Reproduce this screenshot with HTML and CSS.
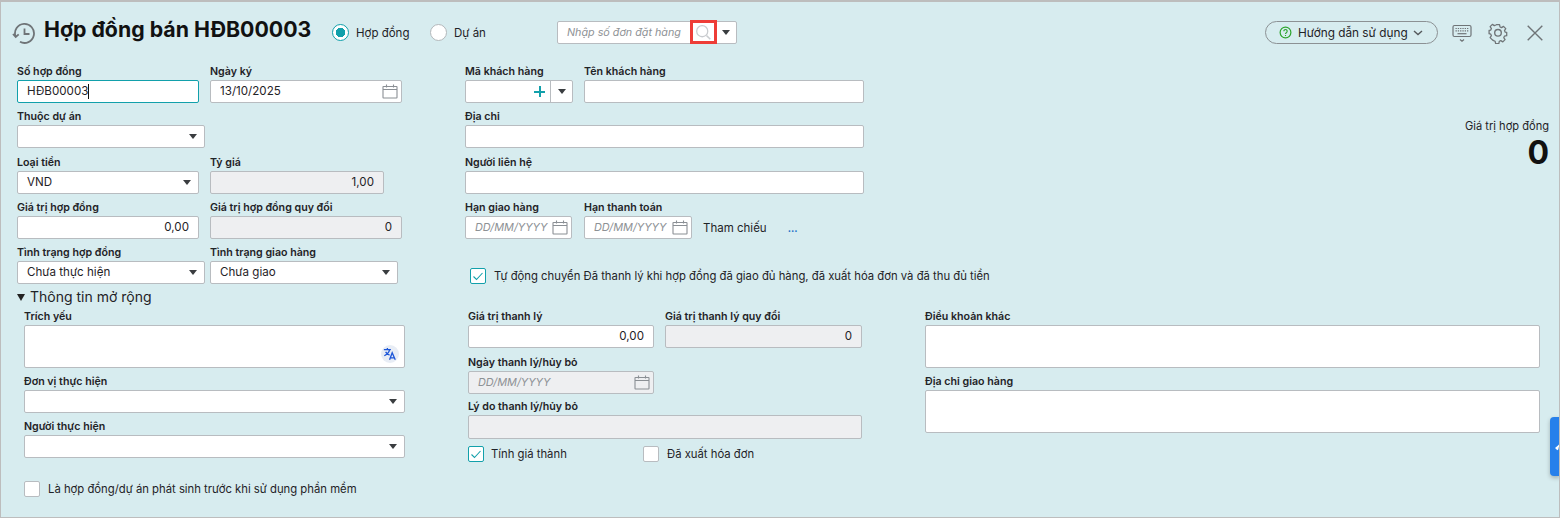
FILE: index.html
```html
<!DOCTYPE html>
<html lang="vi">
<head>
<meta charset="utf-8">
<title>Hợp đồng bán</title>
<link rel="stylesheet" href="styles.css">
</head>
<body>
<svg class="defs" width="0" height="0" aria-hidden="true">
  <symbol id="cal" viewBox="0 0 16 16"><path d="M1.500 3.500h13a.5.5 0 0 1 .5.5v10.500a.5.5 0 0 1-.5.5h-13a.5.5 0 0 1-.5-.5V4a.5.5 0 0 1 .5-.5zM1 6.500h14M4.500 1.500v3M11.500 1.500v3" fill="none" stroke="#8a8f94" stroke-width="1.100"/></symbol>
  <symbol id="tick" viewBox="0 0 16 16"><path d="M3.500 8.500l3 3 6-6.500" fill="none" stroke="#12a0ab" stroke-width="1.100"/></symbol>
</svg>
<div class="page">
  <header class="head">
    <svg class="hist" viewBox="0 0 24 24" width="24" height="24"><path d="M3.500 15.500A9.500 9.500 0 1 1 8 20.800M12.500 7.500v5.500h5M1 13l2.700 3 3-2.700" fill="none" stroke="#6f7477" stroke-width="1.800"/></svg>
    <h1 class="title">Hợp đồng bán HĐB00003</h1>
    <div class="radios">
      <span class="radio on"></span><span class="radio-text first">Hợp đồng</span>
      <span class="radio"></span><span class="radio-text">Dự án</span>
    </div>
    <div class="order">
      <span class="order-text">Nhập số đơn đặt hàng</span>
      <span class="order-search">
        <svg viewBox="0 0 20 20" width="18" height="18"><circle cx="8.500" cy="8.500" r="6.500" fill="none" stroke="#c9cccf" stroke-width="1.500"/><path d="M13.500 13.500l4.500 4.500" stroke="#c9cccf" stroke-width="1.800"/></svg>
      </span>
      <span class="order-drop"><i class="arrow"></i></span>
    </div>
    <div class="tools">
      <div class="guide">
        <svg viewBox="0 0 14 14" width="13" height="13"><circle cx="7" cy="7" r="5.800" fill="none" stroke="#2ea52e" stroke-width="1.300"/><path d="M5.200 5.600a1.800 1.800 0 1 1 2.700 1.600c-.6.400-.9.700-.9 1.300M7 9.700v1" fill="none" stroke="#2ea52e" stroke-width="1.200"/></svg>
        <span>Hướng dẫn sử dụng</span>
        <svg viewBox="0 0 10 6" width="10" height="6"><path d="M1 1l4 3.500L9 1" fill="none" stroke="#55595c" stroke-width="1.400"/></svg>
      </div>
      <svg class="kb" viewBox="0 0 20 20" width="20" height="20"><rect x="1" y="1.500" width="18" height="11" rx="1.500" fill="none" stroke="#6f7477" stroke-width="1.200"/><path d="M3.500 4.500h13M3.500 6.900h13" stroke="#6f7477" stroke-width="1.200" stroke-dasharray="1.300 1"/><path d="M5.500 9.700h9" stroke="#6f7477" stroke-width="1.200"/><path d="M8 15.500l2 1.800 2-1.800" fill="none" stroke="#6f7477" stroke-width="1.200"/></svg>
      <svg class="gear" viewBox="0 0 24 24" width="22" height="22"><path d="M10 2.200h4l.6 2.900 1.900.8 2.500-1.600 2.800 2.800-1.600 2.500.8 1.900 2 .5v4l-2.900.6-.8 1.900 1.600 2.500-2.800 2.800-2.500-1.600-1.900.8-.6 2.900h-4l-.6-2.900-1.900-.8L5 21.300l-2.800-2.800 1.600-2.500-.8-1.900L.9 13.500v-4l2.100-.5.800-1.900-1.600-2.500L5 1.800l2.500 1.600 1.900-.8z" transform="translate(1.500 1) scale(.87)" fill="none" stroke="#6f7477" stroke-width="1.600" stroke-linejoin="round"/><circle cx="12" cy="11.800" r="3.600" fill="none" stroke="#6f7477" stroke-width="1.500"/></svg>
      <svg class="close" viewBox="0 0 16 16" width="16" height="16"><path d="M.7.700l14.600 14.600M15.300.700L.7 15.300" stroke="#6f7477" stroke-width="1.400"/></svg>
    </div>
  </header>

  <main class="main">
    <section class="left">
      <div class="rows">
        <div class="row">
          <div class="field w182"><label>Số hợp đồng</label><div class="box focus"><span class="caret">HĐB00003</span></div></div>
          <div class="field w192"><label>Ngày ký</label><div class="box date"><span>13/10/2025</span><svg width="16" height="16"><use href="#cal"/></svg></div></div>
        </div>
        <div class="row">
          <div class="field w188"><label>Thuộc dự án</label><div class="box select"><span></span><i class="arrow"></i></div></div>
        </div>
        <div class="row">
          <div class="field w182"><label>Loại tiền</label><div class="box select"><span>VND</span><i class="arrow"></i></div></div>
          <div class="field w174"><label>Tỷ giá</label><div class="box off num">1,00</div></div>
        </div>
        <div class="row">
          <div class="field w182"><label>Giá trị hợp đồng</label><div class="box num">0,00</div></div>
          <div class="field w192"><label>Giá trị hợp đồng quy đổi</label><div class="box off num">0</div></div>
        </div>
        <div class="row gap5">
          <div class="field w188"><label>Tình trạng hợp đồng</label><div class="box select"><span>Chưa thực hiện</span><i class="arrow"></i></div></div>
          <div class="field w188"><label>Tình trạng giao hàng</label><div class="box select"><span>Chưa giao</span><i class="arrow"></i></div></div>
        </div>
      </div>
      <div class="more"><i class="more-arrow"></i><span>Thông tin mở rộng</span></div>
      <div class="extra">
        <div class="field"><label>Trích yếu</label>
          <div class="box area">
            <span class="trans"><svg viewBox="0 0 16 16" width="14" height="14"><path d="M1 3h8M5 1v2M7.500 3C7 6 4.500 8.500 1.500 10M3 5.500c1 1.800 2.500 3 4.500 3.800M7.500 14.500l3-8 3.500 8M8.500 12.500h4.500" fill="none" stroke="#1c55d8" stroke-width="1.500"/></svg></span>
          </div>
        </div>
        <div class="field gap-a"><label>Đơn vị thực hiện</label><div class="box select"><span></span><i class="arrow"></i></div></div>
        <div class="field gap-a"><label>Người thực hiện</label><div class="box select"><span></span><i class="arrow"></i></div></div>
        <div class="check prior"><span class="cb"></span><span>Là hợp đồng/dự án phát sinh trước khi sử dụng phần mềm</span></div>
      </div>
    </section>

    <section class="right">
      <div class="upper">
        <div class="cust">
          <div class="rows">
            <div class="row">
              <div class="field w108"><label>Mã khách hàng</label>
                <div class="box code"><span class="plus"></span><span class="code-drop"><i class="arrow"></i></span></div>
              </div>
              <div class="field w280"><label>Tên khách hàng</label><div class="box"></div></div>
            </div>
            <div class="row"><div class="field w399"><label>Địa chỉ</label><div class="box"></div></div></div>
            <div class="row"><div class="field w399"><label>Người liên hệ</label><div class="box"></div></div></div>
            <div class="row gap12">
              <div class="field w107"><label>Hạn giao hàng</label><div class="box date short"><em>DD/MM/YYYY</em><svg width="16" height="16"><use href="#cal"/></svg></div></div>
              <div class="field w108"><label>Hạn thanh toán</label><div class="box date short"><em>DD/MM/YYYY</em><svg width="16" height="16"><use href="#cal"/></svg></div></div>
              <div class="ref"><span>Tham chiếu</span><b>...</b></div>
            </div>
          </div>
        </div>
        <div class="total"><span>Giá trị hợp đồng</span><strong>0</strong></div>
      </div>

      <div class="check auto"><span class="cb on"><svg width="16" height="16"><use href="#tick"/></svg></span><span>Tự động chuyển Đã thanh lý khi hợp đồng đã giao đủ hàng, đã xuất hóa đơn và đã thu đủ tiền</span></div>

      <div class="lower">
        <div class="liq">
          <div class="row">
            <div class="field w186"><label>Giá trị thanh lý</label><div class="box num">0,00</div></div>
            <div class="field w197"><label>Giá trị thanh lý quy đổi</label><div class="box off num">0</div></div>
          </div>
          <div class="field w186 gap-d"><label>Ngày thanh lý/hủy bỏ</label><div class="box off date"><em>DD/MM/YYYY</em><svg width="16" height="16"><use href="#cal"/></svg></div></div>
          <div class="field gap-c"><label>Lý do thanh lý/hủy bỏ</label><div class="box off tall"></div></div>
          <div class="checks">
            <div class="check w175"><span class="cb on"><svg width="16" height="16"><use href="#tick"/></svg></span><span>Tính giá thành</span></div>
            <div class="check"><span class="cb"></span><span>Đã xuất hóa đơn</span></div>
          </div>
        </div>
        <div class="terms">
          <div class="field"><label>Điều khoản khác</label><div class="box area"></div></div>
          <div class="field gap-a"><label>Địa chỉ giao hàng</label><div class="box area"></div></div>
        </div>
      </div>
    </section>
  </main>
  <div class="side-tab"><i></i></div>
</div>
</body>
</html>
```

FILE: styles.css
```css
* { box-sizing: border-box; }
html, body { margin: 0; padding: 0; }
body { width: 1560px; height: 518px; overflow: hidden; font: 11.600px/16px Inter, "Liberation Sans", sans-serif; color: #1f2327; }
.defs { position: absolute; }
.page { position: relative; width: 1560px; height: 518px; background: #d7ecef; border: 1px solid #bdbdbd; border-top-width: 2px; overflow: hidden; }

.head { display: flex; align-items: center; height: 59px; padding: 2px 16px 0 11px; }
.hist { flex: none; }
.title { margin: 0 0 7px 8px; font-size: 21.300px; line-height: 28px; font-weight: 700; color: #111; white-space: nowrap; width: 288px; }
.radios { display: flex; align-items: center; width: 225px; }
.radio { width: 17px; height: 17px; border-radius: 50%; background: #fff; border: 1px solid #b3b8bb; flex: none; }
.radio.on { border-color: #12a0ab; border-width: 1.500px; background: radial-gradient(circle, #12a0ab 0 4.500px, #fff 5px); }
.radio-text { margin-left: 7px; font-size: 11.500px; }
.radio-text.first { width: 74px; }
.order { display: flex; align-items: stretch; width: 180px; height: 23px; background: #fff; border: 1px solid #b8bcc0; border-radius: 2px; }
.order-text { flex: 1; min-width: 0; padding-left: 9px; font-style: italic; font-size: 10.750px; line-height: 21px; color: #8d9195; white-space: nowrap; }
.order-search { flex: none; width: 27px; height: 24px; margin: -2px 0 0; border: 3px solid #ee3d37; display: flex; align-items: center; justify-content: center; background: #fff; }
.order-search svg { margin-top: 1px; width: 17px; height: 17px; }
.order-drop { flex: none; width: 19px; padding-right: 2px; display: flex; align-items: center; justify-content: center; }
.tools { margin-left: auto; display: flex; align-items: center; }
.guide { display: flex; align-items: center; width: 173px; height: 23px; border: 1px solid #8c9194; border-radius: 12px; padding-left: 13px; }
.guide span { margin-left: 6px; font-size: 11.800px; white-space: nowrap; }
.guide svg:last-child { margin-left: 5px; }
.kb { margin-left: 14px; margin-top: 2px; }
.gear { margin-left: 15px; }
.close { margin-left: 18px; }

.arrow { display: block; width: 0; height: 0; border-left: 4px solid transparent; border-right: 4px solid transparent; border-top: 5px solid #3a3d40; }

.main { display: flex; padding-left: 16px; }
.left { width: 388px; flex: none; }
.right { margin-left: 60px; flex: 1; padding-right: 9px; }

.rows { display: flex; flex-direction: column; }
.row { display: flex; gap: 11px; height: 45.250px; }
.gap5 { gap: 5px; }
.gap12 { gap: 12px; }
.field { display: flex; flex-direction: column; }
.field label { display: block; height: 19px; font-size: 10.670px; line-height: 21px; font-weight: 600; color: #1f2327; white-space: nowrap; }
.w107 { width: 107px; } .w108 { width: 108px; } .w174 { width: 174px; } .w182 { width: 182px; }
.w186 { width: 186px; } .w188 { width: 188px; } .w192 { width: 192px; } .w197 { width: 197px; }
.w280 { width: 280px; } .w399 { width: 399px; } .w175 { width: 175px; }

.box { height: 23px; background: #fff; border: 1px solid #b8bcc0; border-radius: 2px; display: flex; align-items: center; padding: 0 9px; font-size: 11.600px; line-height: 21px; color: #1f2327; }
.box em { font-style: italic; color: #8d9195; font-size: 10.900px; white-space: nowrap; }
.focus { border-color: #12a0ab; }
.caret { border-right: 1px solid #111; line-height: 15px; }
.select, .date { justify-content: space-between; }
.select { padding-right: 7px; }
.date { padding-right: 3px; }
.date svg { flex: none; margin-top: -1px; }
.short { padding-right: 3px; }
.num { justify-content: flex-end; }
.off { background: #eeeff1; }
.tall { height: 24px; }
.area { height: 43px; position: relative; }
.trans { position: absolute; right: 5px; bottom: 4px; width: 18px; height: 18px; border-radius: 50%; background: #e8edf5; display: flex; align-items: center; justify-content: center; }

.code { padding: 0; justify-content: flex-end; }
.plus { width: 11px; height: 11px; margin-right: 5px; background: linear-gradient(#12a0ab, #12a0ab) center / 100% 2px no-repeat, linear-gradient(#12a0ab, #12a0ab) center / 2px 100% no-repeat; }
.code-drop { width: 22px; height: 21px; border-left: 1px solid #b8bcc0; display: flex; align-items: center; justify-content: center; }

.ref { display: flex; align-items: center; height: 23px; margin-top: 20px; margin-left: -1px; white-space: nowrap; }
.ref span { font-size: 11.500px; }
.ref b { margin-left: 21px; font-weight: 700; color: #1f73c8; font-size: 10px; }

.more { display: flex; align-items: center; height: 18px; margin-top: 1px; font-size: 14px; }
.more-arrow { width: 0; height: 0; border-left: 4.500px solid transparent; border-right: 4.500px solid transparent; border-top: 7px solid #222; margin-right: 5px; }
.extra { margin-left: 7px; }
.gap-a { margin-top: 3px; }
.gap-c { margin-top: 2px; }
.gap-d { margin-top: 1px; }

.check { display: flex; align-items: center; white-space: nowrap; font-size: 11.300px; }
.cb { flex: none; width: 16px; height: 16px; background: #fff; border: 1px solid #b8bcc0; border-radius: 2px; margin-right: 8px; position: relative; }
.cb.on { border-color: #12a0ab; }
.cb svg { position: absolute; left: -1px; top: -1px; }
.prior { margin-top: 23px; }
.check.w175 .cb { margin-right: 7px; }

.upper { display: flex; justify-content: space-between; }
.cust { width: 399px; }
.total { display: flex; flex-direction: column; align-items: flex-end; margin-top: 57px; margin-right: 1px; }
.total span { font-size: 11.100px; line-height: 16px; }
.total strong { font-size: 32px; line-height: 38px; font-weight: 700; color: #111; }
.auto { margin: 26px 0 0 5px; }

.lower { display: flex; margin-top: 22px; margin-left: 3px; }
.liq { width: 394px; flex: none; }
.terms { margin-left: 63px; margin-right: 10px; flex: 1; }
.checks { display: flex; margin-top: 7px; }

.side-tab { position: absolute; right: -1px; top: 415px; width: 10px; height: 59px; background: #2680eb; border-radius: 4px 0 0 4px; box-shadow: 0 2px 4px rgba(0,0,0,.25); display: flex; align-items: center; }
.side-tab i { display: block; width: 6px; height: 6px; border-left: 2px solid #fff; border-bottom: 2px solid #fff; transform: rotate(45deg); margin-left: 7px; }
```
